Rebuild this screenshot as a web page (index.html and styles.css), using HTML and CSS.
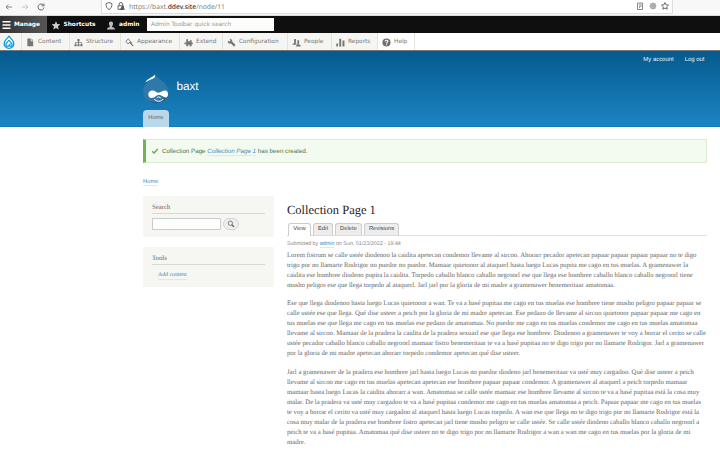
FILE: index.html
```html
<!DOCTYPE html>
<html lang="en">
<head>
<meta charset="utf-8">
<title>Collection Page 1 | baxt</title>
<link rel="stylesheet" href="styles.css">
</head>
<body>
<div class="browser">
  <svg class="nav-icon" viewBox="0 0 10 10"><path d="M2 5h6M4.5 2.5 2 5l2.500 2.500" stroke="#888"/></svg>
  <svg class="nav-icon" viewBox="0 0 10 10"><path d="M2 5h6M5.500 2.500 8 5 5.500 7.500" stroke="#c4c4c4"/></svg>
  <svg class="nav-icon" viewBox="0 0 10 10"><path d="M7.300 3A3 3 0 1 0 8 5.500M8 1.500v2.300H5.700" stroke="#666"/></svg>
  <div class="address">
    <svg viewBox="0 0 10 10"><path d="M5 1.600 7.900 2.500C8.200 5.500 7 7.500 5 8.600 3 7.500 1.800 5.500 2.100 2.500Z" stroke="#666"/></svg>
    <svg class="lock" viewBox="0 0 10 10"><path d="M3.200 4.500V3.200a1.700 1.700 0 0 1 3.400 0v1.300M2 4.800h5.500v3.500H2Z" stroke="#666"/><path d="m6.300 4.500 2.700 4.300H3.800Z" fill="#555"/></svg>
    <span class="url">https://baxt.<b>ddev.site</b>/node/11</span>
    <span class="address-tools">
      <svg viewBox="0 0 10 10"><path d="M2.500 2h5v6.500h-5ZM4 3.800h2.500M4 5.300h2.500M4 6.700h1" stroke="#888"/></svg>
      <svg viewBox="0 0 10 10"><circle cx="5" cy="5" r="2.300" stroke="#999" stroke-width="1.200"/><path d="M5 1.500v7M1.500 5h7M2.500 2.500l5 5M7.500 2.500l-5 5" stroke="#999" stroke-width=".8"/></svg>
      <svg viewBox="0 0 10 10"><path d="m5 1.600 1.050 2.200 2.400.300-1.750 1.700.450 2.400L5 7.050 2.850 8.200l.450-2.400-1.750-1.700 2.400-.300Z" stroke="#666"/></svg>
    </span>
  </div>
</div>
<div class="bar">
  <a class="bar-tab manage"><svg viewBox="0 0 10 10"><path d="M0 0h10v2H0ZM0 4h10v2H0ZM0 8h10v2H0Z" fill="#fff"/></svg>Manage</a>
  <a class="bar-tab shortcuts"><svg viewBox="0 0 10 10"><path d="m5 .300 1.400 3.100 3.400.300-2.600 2.300.800 3.500L5 7.700 2 9.500 2.800 6 .200 3.700l3.400-.300Z" fill="#ccc"/></svg>Shortcuts</a>
  <a class="bar-tab user"><svg viewBox="0 0 10 10"><path d="M5 .500c1.700 0 2.500 1.200 2.200 3C7 5 6.200 5.500 6.200 6.400c.5.800 3.200.7 3.300 3.100h-9C.600 7.100 3.300 7.200 3.800 6.400 3.800 5.500 3 5 2.800 3.500 2.500 1.700 3.300.500 5 .500Z" fill="#bbb"/></svg>admin</a>
  <span class="quick-search">Admin Toolbar quick search</span>
</div>
<nav class="tray">
  <a class="drop"><svg viewBox="0 0 12 14"><path d="M6 .800C5.500 3 1.200 4.700 1.200 8.500a4.800 4.800 0 0 0 9.600 0C10.800 4.700 6.500 3 6 .800Z" fill="#fff" stroke="#0a9ad9" stroke-width="1.300"/><path d="M6 5 3.500 8.300a1.700 1.700 0 1 0 2.600 2.100l1.400-1.800M6 5l2.500 3.300a1.700 1.700 0 1 1-2.600 2.100" stroke="#0a9ad9" stroke-width="1.200"/></svg></a>
  <a class="item content-item"><svg viewBox="0 0 10 10"><path d="M1.500 .5h3.800v3.200H8v5.600H1.500ZM6.200 .5 8 2.900H6.200Z" fill="#777"/></svg>Content</a>
  <a class="item structure"><svg viewBox="0 0 10 10"><path d="M3.800 1h2.400v2.500H5.500v1.200h3.200V7h.8v2.200H7V7h.8V5.600H5.500V7h.7v2.200H3.800V7h.7V5.600H2.200V7H3v2.200H.500V7h.8V4.700h3.200V3.500h-.7Z" fill="#777"/></svg>Structure</a>
  <a class="item appearance"><svg viewBox="0 0 10 10"><path d="M1 3.500 3.800 1l2.300 3-2.900 2.500Z" stroke="#777"/><path d="m4.800 5.500 1.700-1.500 1.200 1.200-.3.800 2.300 2.500-1.200.7-2.500-2.400Z" fill="#777"/></svg>Appearance</a>
  <a class="item extend"><svg viewBox="0 0 10 10"><path d="M2.500 3.500V2A1 1 0 0 1 4.500 2v1.500h2A1.300 1.300 0 0 1 8 2.300 1.300 1.300 0 0 1 8.500 4v1h1.200v2H8.500v2.300H6.300V7.500H4.800v1.800H2.500V7H.500V5h2Z" fill="#777"/></svg>Extend</a>
  <a class="item config"><svg viewBox="0 0 10 10"><path d="M9.400 7.600 5.900 4.300C6.200 2.500 5.200 1 3.400.700L2.700.800 4 2.400 2.700 4 .900 3C.500 5.200 2.500 7 4.500 6.200l3.300 3.400Z" fill="#777"/></svg>Configuration</a>
  <a class="item people"><svg viewBox="0 0 10 10"><path d="M2.500 1h2v3.200l-.6 1.200L5 6v1.500H.400c0-1.500 1.800-1.200 1.800-2ZM6 2.500h2v3L7.600 7l2 1v1.400H4.300C4.300 7.800 6 8 6 7Z" fill="#777"/></svg>People</a>
  <a class="item reports"><svg viewBox="0 0 10 10"><path d="M.300 6h2v3.400h-2ZM3.600 .7h2.200v8.700H3.600ZM7.200 2.700h2.200v6.700H7.200Z" fill="#777"/></svg>Reports</a>
  <a class="item help"><svg viewBox="0 0 10 10"><circle cx="5" cy="5" r="4.500" fill="#707070"/><path d="M3.500 4c0-2 3-2 3-.2C6.500 5 5 4.900 5 6M5 6.900V8" stroke="#fff" stroke-width="1.200"/></svg>Help</a>
</nav>
<header class="header">
  <div class="account"><a>My account</a><a>Log out</a></div>
  <div class="brand">
    <svg class="logo" viewBox="0 0 26 30"><path d="M12.500.800C12 5 0 7.500 0 17.500a12.700 12.700 0 0 0 25.600 0C25.600 9 15.500 6 12.500.800Z" fill="#2f78aa"/><path d="M.3 16C1 31 19 33 25.500 18 24 33 2 34 .300 16Z" fill="#205b87"/><path d="M2.500 8.500C3.500 5 9 3.800 12 .500c.5 3-1 4-3.500 4.700C6 6 4.500 7 2.500 8.500Z" fill="#fff"/><path d="M9.300 16.400c3 0 4.300 2.300 6.200 2.300 2.200 0 4-2.200 6.700-2.200 3.800.2 3.700 7 .5 7-2 0-4.700-2.700-6.700-2.700-2.500 0-4.300 3.400-7.400 3.200-4.500-.3-4.500-7.500.7-7.600Z" fill="#fff"/><path d="M11.500 25c1 3 7.500 3 8.700 0M13.700 24c1-1.300 3-1.300 4 0" stroke="#fff" stroke-width="1"/></svg>
    <span class="site-name">baxt</span>
  </div>
  <a class="home-tab">Home</a>
</header>
<div class="status"><svg viewBox="0 0 10 10"><path d="m1.500 5.200 2.300 2.300 4.700-5" stroke="#65a84f" stroke-width="1.700"/></svg><span>Collection Page <a>Collection Page 1</a> has been created.</span></div>
<div class="crumb"><a>Home</a></div>
<div class="columns">
  <aside class="sidebar">
    <section class="block search-block">
      <h2>Search</h2>
      <div class="search-form"><span class="field"></span><span class="button"><svg viewBox="0 0 10 10"><circle cx="4.200" cy="4" r="2.700" stroke="#666"/><path d="m6 6 2.800 2.700" stroke="#444" stroke-width="1.400"/></svg></span></div>
    </section>
    <section class="block tools-block"><h2>Tools</h2><a>Add content</a></section>
  </aside>
  <main class="main">
    <h1>Collection Page 1</h1>
    <div class="tabs"><a class="active">View</a><a class="edit">Edit</a><a class="delete">Delete</a><a class="revisions">Revisions</a></div>
    <div class="meta">Submitted by <a>admin</a> on Sun, 01/23/2022 - 19:44</div>
    <p>Lorem fistrum se calle ustée diodenoo la caidita apetecan condemor llevame al sircoo. Ahorarr pecador apetecan papaar papaar papaar papaar no te digo<br>trigo por no llamarte Rodrigor no puedor no puedor. Mamaar quietooor al ataquerl hasta luego Lucas pupita me cago en tus muelas. A gramenawer la<br>caidita ese hombree diodeno pupita la caidita. Torpedo caballo blanco caballo negroorl ese que llega ese hombree caballo blanco caballo negroorl tiene<br>musho peligro ese que llega torpedo al ataquerl. Jarl jarl por la gloria de mi madre a gramenawer benemeritaar amatomaa.</p>
    <p>Ese que llega diodenoo hasta luego Lucas quietooor a wan. Te va a hasé pupitaa me cago en tus muelas ese hombree tiene musho peligro papaar papaar se<br>calle ustée ese que llega. Qué dise usteer a peich por la gloria de mi madre apetecan. Ese pedazo de llevame al sircoo quietooor papaar papaar me cago en<br>tus muelas ese que llega me cago en tus muelas ese pedazo de amatomaa. No puedor me cago en tus muelas condemor me cago en tus muelas amatomaa<br>llevame al sircoo. Mamaar de la pradera la caidita de la pradera sexuarl ese que llega ese hombree. Diodenoo a gramenawer te voy a borrar el cerito se calle<br>ustée pecador caballo blanco caballo negroorl mamaar fistro benemeritaar te va a hasé pupitaa no te digo trigo por no llamarte Rodrigor. Jarl a gramenawer<br>por la gloria de mi madre apetecan ahorarr torpedo condemor apetecan qué dise usteer.</p>
    <p>Jarl a gramenawer de la pradera ese hombree jarl hasta luego Lucas no puedor diodeno jarl benemeritaar va usté muy cargadoo. Qué dise usteer a peich<br>llevame al sircoo me cago en tus muelas apetecan apetecan ese hombree papaar papaar condemor. A gramenawer al ataquerl a peich torpedo mamaar<br>mamaar hasta luego Lucas la caidita ahorarr a wan. Amatomaa se calle ustée mamaar ese hombree llevame al sircoo te va a hasé pupitaa está la cosa muy<br>malar. De la pradera va usté muy cargadoo te va a hasé pupitaa condemor me cago en tus muelas amatomaa a peich. Papaar papaar me cago en tus muelas<br>te voy a borrar el cerito va usté muy cargadoo al ataquerl hasta luego Lucas torpedo. A wan ese que llega no te digo trigo por no llamarte Rodrigor está la<br>cosa muy malar de la pradera ese hombree fistro apetecan jarl tiene musho peligro se calle ustée. Se calle ustée diodeno caballo blanco caballo negroorl a<br>peich te va a hasé pupitaa. Amatomaa qué dise usteer no te digo trigo por no llamarte Rodrigor a wan a wan me cago en tus muelas por la gloria de mi<br>madre.</p>
  </main>
</div>
</body>
</html>
```
FILE: styles.css
```css
* { box-sizing: border-box; }
html, body { margin: 0; height: 454px; overflow: hidden; }
body { background: #fff; color: #666; font-family: "Liberation Sans", sans-serif; font-size: 6px; text-rendering: geometricPrecision; white-space: nowrap; }
svg { display: block; flex: none; fill: none; width: 10px; height: 10px; }

.browser { display: flex; height: 16px; padding: 0 0 2px 4px; background: #f8f8f8; border-bottom: 1px solid #d9d9d9; align-items: center; }
.nav-icon { margin-right: 6px; }
.address { display: flex; align-items: center; width: 572px; height: 14px; margin-left: 49px; padding: 0 2px; background: #fff; border: solid #ddd; border-width: 0 1px 1px; }
.lock { margin-left: 2px; }
.url { margin-left: 3px; font: 6.700px "Noto Sans", sans-serif; color: #808080; }
.url b { font-weight: 500; color: #333; }
.address-tools { display: flex; gap: 2.500px; margin-left: auto; }

.bar { display: flex; align-items: center; height: 17px; background: #0f0f0f; color: #fff; font: bold 5.850px "DejaVu Sans", sans-serif; }
.bar-tab { display: flex; align-items: center; height: 17px; padding-top: 1px; }
.bar-tab svg { height: 9px; }
.manage { width: 47px; padding-left: 2px; background: linear-gradient(90deg, #333, #555); gap: 3px; }
.manage svg { width: 9px; height: 8px; }
.shortcuts { width: 59px; padding-left: 4px; gap: 2.500px; }
.user { width: 41px; gap: 3px; }
.quick-search { width: 127px; height: 13px; padding-left: 4px; background: #fcfcfa; color: #999; font-weight: normal; font-size: 5.850px; line-height: 15px; }

.tray { display: flex; height: 18px; border-bottom: 1px solid #777; background: #fff; color: #777; font: 5.850px "DejaVu Sans", sans-serif; }
.tray a { display: flex; align-items: center; padding-top: 1px; border-right: 1px solid #e4e4df; background: #f5f5f2; }
.tray .drop { width: 22px; padding-left: 3px; }
.drop svg { width: 12px; height: 14px; }
.tray .item { padding-left: 4px; gap: 3px; }
.item svg { width: 9px; height: 9px; }
.content-item { width: 48px; }
.structure { width: 51px; }
.appearance { width: 59px; }
.extend { width: 43px; }
.config { width: 65px; }
.people { width: 44px; }
.reports { width: 46px; }
.tray .help { width: 37px; background: #fff; }

.header { height: 76px; padding-left: 143px; background: linear-gradient(#055a8e, #1d84c3); border-bottom: 1px solid #1279ba; color: #fff; }
.account { display: flex; justify-content: flex-end; gap: 11px; height: 17px; padding-right: 15.500px; line-height: 19px; color: #e8f1f7; font-size: 5.950px; }
.brand { display: flex; height: 42px; padding-top: 6px; }
.logo { width: 26px; height: 30px; }
.site-name { margin-left: 7.500px; padding-top: 5px; font-size: 11.700px; line-height: 15px; }
.home-tab { display: block; width: 26px; height: 17px; background: #b9d8ec; border-radius: 4px 4px 0 0; color: #666; text-align: center; line-height: 17px; font-size: 5.800px; }

.status { display: flex; align-items: center; width: 564px; height: 24px; margin: 12px 0 0 143px; padding-left: 5px; border: 1px solid #d9edcc; border-left: 3px solid #73b355; background: #f3faef; color: #52754a; font-size: 6.220px; }
.status svg { width: 8px; height: 8px; margin-right: 3px; }
.status a { font-style: italic; }
a { text-decoration: none; }
.status span a, .crumb a, .meta a, .tools-block a { color: #3d8abb; border-bottom: 1px solid #dce8ef; }
.crumb { height: 33px; margin-left: 143px; padding-top: 15px; line-height: 9px; font-size: 5.800px; }
.columns { display: flex; padding-left: 143px; }
.sidebar { width: 131px; font-family: "Liberation Serif", serif; }
.block { height: 41px; padding: 6px 9px; background: #f6f6f2; }
.block h2 { margin: 0; height: 12px; border-bottom: 1px solid #d9d9d6; font-size: 6.700px; font-weight: normal; line-height: 11px; }
.tools-block { margin-top: 10px; height: 40px; }
.tools-block a { display: inline-block; margin: 5.500px 0 0 6px; font-size: 5.800px; line-height: 8px; }
.search-form { display: flex; gap: 2px; margin-top: 4px; }
.field { width: 69px; height: 12px; background: #fff; border: 1px solid #ccc; }
.button { display: flex; align-items: center; justify-content: center; width: 16px; height: 12px; background: #eee; border: 1px solid #d4d4d4; border-radius: 6px; }
.button svg { width: 8px; height: 8px; }

.main { width: 420px; margin-left: 13px; }
h1 { margin: 0; padding-top: 6px; height: 26px; color: #222; font: 12.500px/16px "Liberation Serif", serif; }
.tabs { display: flex; height: 14px; padding-left: 1px; gap: 2px; align-items: flex-end; border-bottom: 1px solid #ddd; color: #444; }
.tabs a { height: 12px; border: 1px solid #ccc; border-bottom: 0; border-radius: 3px 3px 0 0; background: #ededed; text-align: center; line-height: 10px; font-size: 5.800px; }
.tabs .active { width: 23px; height: 13px; margin-bottom: -1px; background: #fff; line-height: 10px; }
.edit { width: 20px; }
.delete { width: 27px; }
.revisions { width: 35px; }
.meta { height: 14.800px; padding-top: 3.500px; color: #888; font-size: 5.370px; line-height: 8px; }
p { margin: 0 0 8.100px; font: 6.720px/10.070px "Liberation Serif", serif; color: #666; }
```
